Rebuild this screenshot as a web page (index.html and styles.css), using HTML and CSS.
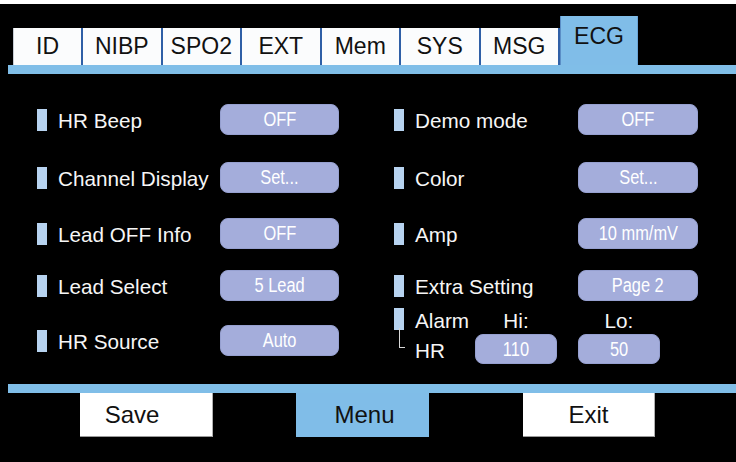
FILE: index.html
```html
<!DOCTYPE html>
<html lang="en">
<head>
<meta charset="utf-8">
<title>ECG Settings</title>
<link rel="stylesheet" href="styles.css">
</head>
<body>
<div class="screen">
  <nav class="tabs">
    <div class="tab tab-first">ID</div>
    <div class="tab">NIBP</div>
    <div class="tab">SPO2</div>
    <div class="tab">EXT</div>
    <div class="tab">Mem</div>
    <div class="tab">SYS</div>
    <div class="tab">MSG</div>
    <div class="tab tab-active">ECG</div>
  </nav>
  <div class="rule"></div>
  <main class="settings">
    <section class="col col-left">
      <div class="row"><span class="ind"></span><span class="label">HR Beep</span><span class="btn"><span class="btn-text">OFF</span></span></div>
      <div class="row"><span class="ind"></span><span class="label">Channel Display</span><span class="btn"><span class="btn-text">Set...</span></span></div>
      <div class="row"><span class="ind"></span><span class="label">Lead OFF Info</span><span class="btn"><span class="btn-text">OFF</span></span></div>
      <div class="row"><span class="ind"></span><span class="label">Lead Select</span><span class="btn"><span class="btn-text">5 Lead</span></span></div>
      <div class="row"><span class="ind"></span><span class="label">HR Source</span><span class="btn"><span class="btn-text">Auto</span></span></div>
    </section>
    <section class="col col-right">
      <div class="row"><span class="ind"></span><span class="label">Demo mode</span><span class="btn"><span class="btn-text">OFF</span></span></div>
      <div class="row"><span class="ind"></span><span class="label">Color</span><span class="btn"><span class="btn-text">Set...</span></span></div>
      <div class="row"><span class="ind"></span><span class="label">Amp</span><span class="btn"><span class="btn-text">10 mm/mV</span></span></div>
      <div class="row"><span class="ind"></span><span class="label">Extra Setting</span><span class="btn"><span class="btn-text">Page 2</span></span></div>
      <div class="alarm">
        <span class="ind"></span>
        <span class="label">Alarm</span>
        <span class="hint">Hi:</span>
        <span class="hint hint-lo">Lo:</span>
        <span class="connector"></span>
        <span class="label">HR</span>
        <span class="btn btn-small"><span class="btn-text">110</span></span>
        <span class="btn btn-small btn-lo"><span class="btn-text">50</span></span>
      </div>
    </section>
  </main>
  <div class="rule"></div>
  <footer class="actions">
    <div class="action action-save">Save</div>
    <div class="action action-menu">Menu</div>
    <div class="action action-exit">Exit</div>
  </footer>
</div>
</body>
</html>
```

FILE: styles.css
```css
html, body {
  margin: 0;
  padding: 0;
  background: #ffffff;
}

.screen {
  margin-top: 4px;
  width: 736px;
  height: 458px;
  background: #000000;
  font-family: "Liberation Sans", Arial, sans-serif;
  overflow: hidden;
}

/* ---------- tabs ---------- */
.tabs {
  display: flex;
  align-items: flex-end;
  height: 49px;
  margin-top: 12px;
  padding-left: 13px;
}

.tab {
  box-sizing: border-box;
  width: 79.5px;
  height: 37px;
  display: flex;
  align-items: center;
  justify-content: center;
  background: #fbfcfd;
  border-right: 2px solid #2f5fa6;
  color: #111111;
  font-size: 23px;
}

.tab-first {
  width: 70px;
  border-left: 1px solid #c6ccd4;
}

.tab-active {
  width: 78px;
  height: 49px;
  align-items: flex-start;
  padding-top: 8px;
  line-height: 25px;
  background: #80bde8;
  border-left: 1px solid #5b8ec6;
  border-right: 1px solid #6aa4d6;
}

.rule {
  height: 9px;
  margin-left: 8px;
  background: #80bee8;
}

/* ---------- settings ---------- */
.settings {
  box-sizing: border-box;
  height: 310px;
  padding: 30px 0 0 37px;
  display: grid;
  grid-template-columns: 357px 1fr;
}

.col {
  display: flex;
  flex-direction: column;
}

.row {
  display: flex;
  align-items: center;
  height: 31px;
}

.row:nth-child(2) { margin-top: 27px; }
.row:nth-child(3) { margin-top: 25px; }
.row:nth-child(4) { margin-top: 21px; }
.row:nth-child(5) { margin-top: 24px; }

.ind {
  width: 10px;
  height: 22px;
  margin-right: 11px;
  background: #b7d3f0;
  flex: none;
}

.label {
  color: #f6f6f6;
  font-size: 20.7px;
  white-space: nowrap;
  padding-top: 3px;
}

.row .label {
  width: 162px;
  flex: none;
}

.col-right .row .label {
  width: 163px;
}

.btn {
  box-sizing: border-box;
  width: 119px;
  height: 31px;
  display: flex;
  align-items: center;
  justify-content: center;
  background: #a4addb;
  border: 1px solid #96a0d0;
  border-radius: 8px;
  color: #ffffff;
  font-size: 20px;
  flex: none;
}

.btn-text {
  display: inline-block;
  transform: scaleX(0.82);
  white-space: nowrap;
}

.col-right .btn {
  width: 120px;
}

/* ---------- alarm block ---------- */
.alarm {
  margin-top: 7px;
  display: grid;
  grid-template-columns: 21px 60px 82px 21px 82px;
  grid-template-rows: 22px 30px;
  row-gap: 4px;
  align-items: center;
}

.alarm .ind {
  margin: 0;
}

.hint {
  grid-column: 3;
  text-align: center;
  color: #f6f6f6;
  font-size: 20.7px;
  padding-top: 3px;
}

.hint-lo {
  grid-column: 5;
}

.connector {
  grid-column: 1;
  align-self: start;
  box-sizing: border-box;
  width: 6px;
  height: 20px;
  margin: -6px 0 0 5px;
  border-left: 1px solid #d8d8d8;
  border-bottom: 1px solid #d8d8d8;
}

.alarm .btn-small {
  grid-column: 3;
  width: 82px;
  height: 30px;
}

.alarm .btn-lo {
  grid-column: 5;
}

/* ---------- footer ---------- */
.actions {
  display: flex;
  padding-left: 80px;
}

.action {
  box-sizing: border-box;
  width: 133px;
  height: 44px;
  display: flex;
  align-items: center;
  justify-content: center;
  background: #ffffff;
  color: #111111;
  font-size: 24px;
}

.action-save,
.action-exit {
  border-bottom: 1px solid #9a9a9a;
  border-right: 1px solid #b0b0b0;
}

.action-save {
  padding-right: 28px;
}

.action-menu {
  margin-left: 83px;
  padding-left: 4px;
  background: #80bde8;
}

.action-exit {
  width: 132px;
  margin-left: 94px;
}
```
